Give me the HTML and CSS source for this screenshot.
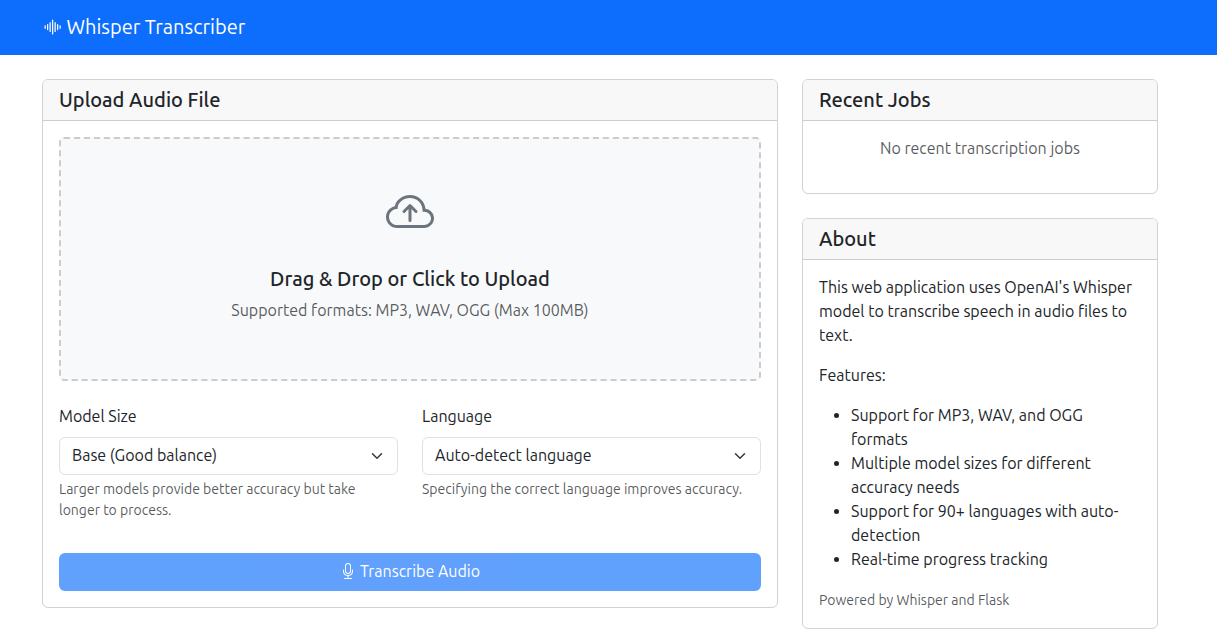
FILE: index.html
```
<!DOCTYPE html>
<html lang="en">
<head>
<meta charset="utf-8">
<title>Whisper Transcriber</title>
<link rel="stylesheet" href="styles.css">
</head>
<body>
<nav class="navbar">
  <a class="brand">
    <svg class="brand-icon" viewBox="0 0 16 16" fill="none" stroke="currentColor" stroke-linecap="round"><path d="M8.5 2.5v11M6.5 4.5v7M10.5 4.5v7M4.5 6v4M12.5 6v4M2.5 7v2M14.5 7v2"/></svg>
    <span>Whisper Transcriber</span>
  </a>
</nav>
<main class="layout">
  <section class="card">
    <div class="card-header"><h5 class="title">Upload Audio File</h5></div>
    <div class="card-body">
      <div class="dropzone">
        <svg class="cloud" viewBox="0 0 16 16" fill="currentColor"><path fill-rule="evenodd" d="M7.646 5.146a.5.5 0 0 1 .708 0l2 2a.5.5 0 0 1-.708.708L8.5 6.707V10.5a.5.5 0 0 1-1 0V6.707L6.354 7.854a.5.5 0 1 1-.708-.708z"/><path d="M4.406 3.342A5.53 5.53 0 0 1 8 2c2.69 0 4.923 2 5.166 4.579C14.758 6.804 16 8.137 16 9.773 16 11.569 14.502 13 12.687 13H3.781C1.708 13 0 11.366 0 9.318c0-1.763 1.266-3.223 2.942-3.593.143-.863.698-1.723 1.464-2.383m.653.757c-.757.653-1.153 1.44-1.153 2.056v.448l-.445.049C2.064 6.805 1 7.952 1 9.318 1 10.785 2.23 12 3.781 12h8.906C13.98 12 15 10.988 15 9.773c0-1.216-1.02-2.228-2.313-2.228h-.5v-.5C12.188 4.825 10.328 3 8 3a4.53 4.53 0 0 0-2.941 1.1z"/></svg>
        <h5 class="title">Drag &amp; Drop or Click to Upload</h5>
        <p class="formats">Supported formats: MP3, WAV, OGG (Max 100MB)</p>
      </div>
      <div class="fields">
        <div class="field">
          <label class="label">Model Size</label>
          <div class="select"><span class="value">Base (Good balance)</span><svg class="chevron" viewBox="0 0 16 16" fill="none" stroke="#343a40" stroke-width="2" stroke-linecap="round" stroke-linejoin="round"><path d="m2 5 6 6 6-6"/></svg></div>
          <div class="help">Larger models provide better accuracy but take longer to process.</div>
        </div>
        <div class="field">
          <label class="label">Language</label>
          <div class="select"><span class="value">Auto-detect language</span><svg class="chevron" viewBox="0 0 16 16" fill="none" stroke="#343a40" stroke-width="2" stroke-linecap="round" stroke-linejoin="round"><path d="m2 5 6 6 6-6"/></svg></div>
          <div class="help">Specifying the correct language improves accuracy.</div>
        </div>
      </div>
      <button class="submit" disabled>
        <svg class="mic" viewBox="0 0 16 16" fill="currentColor"><path d="M3.5 6.5A.5.5 0 0 1 4 7v1a4 4 0 0 0 8 0V7a.5.5 0 0 1 1 0v1a5 5 0 0 1-4.5 4.975V15h3a.5.5 0 0 1 0 1h-7a.5.5 0 0 1 0-1h3v-2.025A5 5 0 0 1 3 8V7a.5.5 0 0 1 .5-.5"/><path d="M10 8a2 2 0 1 1-4 0V3a2 2 0 1 1 4 0zM8 0a3 3 0 0 0-3 3v5a3 3 0 0 0 6 0V3a3 3 0 0 0-3-3"/></svg>
        <span>Transcribe Audio</span>
      </button>
    </div>
  </section>
  <aside class="sidebar">
    <section class="card">
      <div class="card-header"><h5 class="title">Recent Jobs</h5></div>
      <div class="card-body card-text"><p class="empty">No recent transcription jobs</p></div>
    </section>
    <section class="card">
      <div class="card-header"><h5 class="title">About</h5></div>
      <div class="card-body card-text">
        <p class="about">This web application uses OpenAI's Whisper model to transcribe speech in audio files to text.</p>
        <p>Features:</p>
        <ul class="features">
          <li>Support for MP3, WAV, and OGG formats</li>
          <li>Multiple model sizes for different accuracy needs</li>
          <li>Support for 90+ languages with auto-detection</li>
          <li>Real-time progress tracking</li>
        </ul>
        <p class="powered">Powered by Whisper and Flask</p>
      </div>
    </section>
  </aside>
</main>
</body>
</html>
```
FILE: styles.css
```
* { box-sizing: border-box; }
body {
  margin: 0;
  background: #fff;
  color: #212529;
  font: 400 16px/24px Ubuntu, "Open Sans", "Noto Sans", sans-serif;
  overflow: hidden;
}
p, ul, h5 { margin: 0; }
.navbar {
  display: flex;
  align-items: center;
  height: 55px;
  padding: 0 42px 1px;
  background: #0d6efd;
  color: #fff;
}
.brand {
  display: flex;
  align-items: center;
  gap: 4.5px;
  font-size: 20px;
  line-height: 30px;
}
.brand-icon { width: 20px; height: 20px; }
.layout {
  display: grid;
  grid-template-columns: 736px 356px;
  gap: 24px;
  align-items: start;
  margin: 24px 0 0 42px;
}
.sidebar { display: grid; gap: 24px; }
.card {
  border: 1px solid #d2d2d2;
  border-radius: 6px;
  background: #fff;
}
.card-header {
  padding: 8px 16px;
  border-bottom: 1px solid #cdcdcd;
  border-radius: 5px 5px 0 0;
  background: #f8f8f8;
}
.title {
  font-size: 20px;
  font-weight: 500;
  line-height: 24px;
}
.card-body { padding: 16px; }
.card-text { padding-top: 15px; }
.dropzone {
  display: flex;
  flex-direction: column;
  align-items: center;
  height: 244px;
  padding-top: 50px;
  border: 2px dashed #ccc;
  border-radius: 5px;
  background: #f8f9fa;
}
.cloud {
  width: 48px;
  height: 48px;
  margin-bottom: 30px;
  color: #6c757d;
}
.formats {
  margin-top: 7px;
  color: rgba(33, 37, 41, .75);
}
.fields {
  display: grid;
  grid-template-columns: 1fr 1fr;
  gap: 24px;
  margin-top: 23px;
}
.label { display: block; }
.select {
  display: flex;
  align-items: center;
  justify-content: space-between;
  height: 38px;
  margin-top: 9px;
  padding: 0 12px;
  border: 1px solid #dee2e6;
  border-radius: 6px;
}
.value { padding-bottom: 2px; }
.chevron { width: 16px; height: 12px; }
.help {
  margin-top: 4px;
  color: rgba(33, 37, 41, .75);
  font-size: 14px;
  line-height: 21px;
}
.submit {
  display: flex;
  align-items: center;
  justify-content: center;
  gap: 4px;
  width: 100%;
  height: 38px;
  margin-top: 32px;
  padding: 0 0 2px;
  border: 0;
  border-radius: 6px;
  background: #0d6efd;
  color: #fff;
  font: inherit;
  opacity: .65;
}
.mic { width: 16px; height: 16px; }
.empty {
  margin-bottom: 17px;
  color: rgba(33, 37, 41, .75);
  text-align: center;
}
.about { margin-bottom: 16px; }
.features {
  margin: 16px 0 17px;
  padding-left: 32px;
}
.powered {
  color: rgba(33, 37, 41, .75);
  font-size: 14px;
}
```
